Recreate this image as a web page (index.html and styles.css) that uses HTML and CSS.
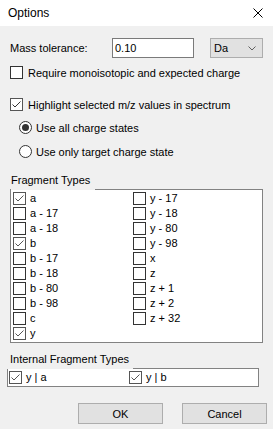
FILE: index.html
```html
<!DOCTYPE html>
<html>
<head>
<meta charset="utf-8">
<link rel="stylesheet" href="styles.css">
</head>
<body>
<div class="dialog">
  <div class="titlebar">
    <span class="title">Options</span>
    <svg class="close" width="10" height="10" viewBox="0 0 10 10"><path d="M0.5 0.5 L9.5 9.5 M9.5 0.5 L0.5 9.5" stroke="#000" stroke-width="1" fill="none"/></svg>
  </div>
  <div class="content">
    <div class="row-mass">
      <span class="mass-label">Mass tolerance:</span>
      <div class="textbox">0.10</div>
      <div class="combo"><span>Da</span><svg width="8" height="5" viewBox="0 0 8 5"><path d="M0.5 0.5 L4 4 L7.5 0.5" stroke="#606060" fill="none"/></svg></div>
    </div>
    <div class="opt opt-require"><span class="cb"></span><span>Require monoisotopic and expected charge</span></div>
    <div class="opt opt-highlight"><span class="cb checked"><svg viewBox="0 0 11 11"><path d="M1.5 5.5 L4 8 L9.5 2.5" stroke="#333" fill="none"/></svg></span><span>Highlight selected m/z values in spectrum</span></div>
    <div class="opt opt-radio1"><span class="rb on"></span><span>Use all charge states</span></div>
    <div class="opt opt-radio2"><span class="rb"></span><span>Use only target charge state</span></div>

    <div class="grp-label grp-frag">Fragment Types</div>
    <div class="listbox frag-list">
      <div class="item"><span class="cb checked"><svg viewBox="0 0 11 11"><path d="M1.5 5.5 L4 8 L9.5 2.5" stroke="#555" fill="none"/></svg></span><span>a</span></div>
      <div class="item"><span class="cb"></span><span>a - 17</span></div>
      <div class="item"><span class="cb"></span><span>a - 18</span></div>
      <div class="item"><span class="cb checked"><svg viewBox="0 0 11 11"><path d="M1.5 5.5 L4 8 L9.5 2.5" stroke="#555" fill="none"/></svg></span><span>b</span></div>
      <div class="item"><span class="cb"></span><span>b - 17</span></div>
      <div class="item"><span class="cb"></span><span>b - 18</span></div>
      <div class="item"><span class="cb"></span><span>b - 80</span></div>
      <div class="item"><span class="cb"></span><span>b - 98</span></div>
      <div class="item"><span class="cb"></span><span>c</span></div>
      <div class="item"><span class="cb checked"><svg viewBox="0 0 11 11"><path d="M1.5 5.5 L4 8 L9.5 2.5" stroke="#555" fill="none"/></svg></span><span>y</span></div>
      <div class="item"><span class="cb"></span><span>y - 17</span></div>
      <div class="item"><span class="cb"></span><span>y - 18</span></div>
      <div class="item"><span class="cb"></span><span>y - 80</span></div>
      <div class="item"><span class="cb"></span><span>y - 98</span></div>
      <div class="item"><span class="cb"></span><span>x</span></div>
      <div class="item"><span class="cb"></span><span>z</span></div>
      <div class="item"><span class="cb"></span><span>z + 1</span></div>
      <div class="item"><span class="cb"></span><span>z + 2</span></div>
      <div class="item"><span class="cb"></span><span>z + 32</span></div>
    </div>

    <div class="grp-label grp-internal">Internal Fragment Types</div>
    <div class="listbox internal-list">
      <div class="item"><span class="cb checked"><svg viewBox="0 0 11 11"><path d="M1.5 5.5 L4 8 L9.5 2.5" stroke="#555" fill="none"/></svg></span><span>y | a</span></div>
      <div class="item"><span class="cb checked"><svg viewBox="0 0 11 11"><path d="M1.5 5.5 L4 8 L9.5 2.5" stroke="#555" fill="none"/></svg></span><span>y | b</span></div>
    </div>

    <div class="buttons">
      <div class="btn">OK</div>
      <div class="btn">Cancel</div>
    </div>
  </div>
</div>
</body>
</html>
```

FILE: styles.css
```css
* { box-sizing: border-box; }
html, body { margin: 0; padding: 0; }
body {
  width: 273px;
  height: 429px;
  background: #f0f0f0;
  font-family: "Liberation Sans", Arial, sans-serif;
  font-size: 11px;
  color: #000;
  overflow: hidden;
}
.dialog { width: 273px; height: 429px; display: flex; flex-direction: column; }
.titlebar {
  height: 26px;
  background: #fff;
  display: flex;
  align-items: center;
  justify-content: space-between;
  padding: 0 10px 0 8px;
}
.title { font-size: 12px; }
.close { display: block; }
.content { display: flex; flex-direction: column; }

.row-mass {
  margin-top: 12px;
  height: 20px;
  display: flex;
  align-items: center;
  padding-left: 10px;
}
.mass-label { width: 102px; }
.textbox {
  width: 82px;
  height: 20px;
  background: #fff;
  border: 1px solid #7a7a7a;
  padding: 2px 0 0 2px;
  line-height: 14px;
}
.combo {
  margin-left: 16px;
  width: 53px;
  height: 20px;
  background: #e1e1e1;
  border: 1px solid #adadad;
  display: flex;
  align-items: center;
  justify-content: space-between;
  padding: 0 6px 0 3px;
}
.combo svg { display: block; }

.opt { display: flex; align-items: center; height: 13px; padding-left: 10px; }
.opt-require { margin-top: 8px; }
.opt-highlight { margin-top: 19px; }
.opt-radio1 { margin-top: 10px; padding-left: 19px; }
.opt-radio2 { margin-top: 11px; padding-left: 19px; }
.opt .cb { margin-right: 5px; }
.opt .rb { margin-right: 4px; }

.cb {
  width: 13px;
  height: 13px;
  flex: none;
  background: #fff;
  border: 1px solid #333;
  display: block;
}
.cb.checked { border-color: #555; }
.cb svg { display: block; width: 11px; height: 11px; }
.rb {
  width: 13px;
  height: 13px;
  flex: none;
  border-radius: 50%;
  background: #fff;
  border: 1px solid #333;
  display: flex;
  align-items: center;
  justify-content: center;
}
.rb.on::after {
  content: "";
  width: 7px;
  height: 7px;
  border-radius: 50%;
  background: #333;
}

.grp-label {
  height: 17px;
  padding-top: 1px;
  background: #f0f0f0;
  margin-bottom: -1px;
  position: relative;
  z-index: 1;
  align-self: flex-start;
}
.grp-frag { margin-top: 15px; margin-left: 11px; padding-right: 5px; }
.grp-internal { margin-top: 9px; margin-left: 7px; padding-left: 3px; padding-right: 4px; }

.listbox { background: #fff; border: 1px solid #828282; }
.frag-list {
  margin-left: 10px;
  width: 253px;
  height: 154px;
  padding: 1px 0 0 2px;
  display: grid;
  grid-template-rows: repeat(10, 15px);
  grid-template-columns: 120px 120px;
  grid-auto-flow: column;
}
.item { display: flex; align-items: center; height: 15px; line-height: 15px; }
.item .cb { margin-right: 4px; }

.internal-list {
  margin-left: 7px;
  width: 252px;
  height: 19px;
  padding: 0 0 0 1px;
  display: grid;
  grid-template-columns: 120px 120px;
  align-items: center;
}

.buttons {
  margin-top: 16px;
  display: flex;
  justify-content: flex-end;
  gap: 19px;
  padding-right: 6px;
}
.btn {
  width: 85px;
  height: 21px;
  background: #e1e1e1;
  border: 1px solid #adadad;
  display: flex;
  align-items: center;
  justify-content: center;
}
```
